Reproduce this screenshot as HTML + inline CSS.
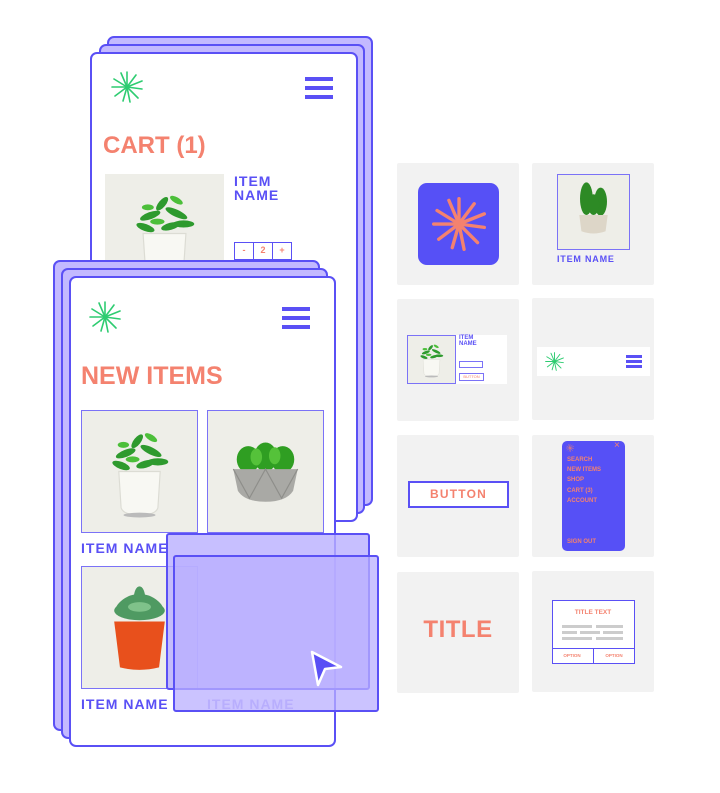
<!DOCTYPE html>
<html><head><meta charset="utf-8"><style>
*{margin:0;padding:0;box-sizing:border-box}
body{width:720px;height:793px;background:#fff;position:relative;overflow:hidden;font-family:"Liberation Sans",sans-serif}
.a{position:absolute}
.layer{position:absolute;background:#c3b9ff;border:2px solid #5a50f5;border-radius:7px}
.ph{position:absolute;background:#fff;border:2px solid #5a50f5;border-radius:7px;overflow:hidden}
.coral{color:#f4826f}
.blue{color:#5a50f5}
.tile{position:absolute;background:#f2f2f2;border-radius:2px}
.hb{position:absolute;width:28px;height:22px}
.hb i{display:block;height:4px;background:#5a50f5;margin-bottom:5px}
.b{font-weight:bold}
svg.st{stroke-width:1.6}
</style></head><body>
<svg width="0" height="0" style="position:absolute">
<defs>
<symbol id="ast" viewBox="-16 -16 32 32">
<g stroke="currentColor" stroke-linecap="round">
<line x1="0" y1="0" x2="0" y2="-15"/><line x1="0" y1="0" x2="9" y2="-12"/><line x1="0" y1="0" x2="15" y2="-6"/><line x1="0" y1="0" x2="15" y2="2"/><line x1="0" y1="0" x2="11" y2="11"/><line x1="0" y1="0" x2="3" y2="15"/><line x1="0" y1="0" x2="-4" y2="14"/><line x1="0" y1="0" x2="-12" y2="9"/><line x1="0" y1="0" x2="-15" y2="0"/><line x1="0" y1="0" x2="-13" y2="-8"/><line x1="0" y1="0" x2="-6" y2="-14"/>
</g></symbol>
<symbol id="jade" viewBox="0 0 100 100">
<rect width="100" height="100" fill="#eeeee8"/>
<path d="M32 50 h36 l-2 30 q-2 6 -16 6 q-14 0 -16 -6z" fill="#f8f8f3" stroke="#dcdcd4"/>
<ellipse cx="50" cy="86" rx="14" ry="2" fill="#bbb"/>
<g fill="#2e9a2e"><ellipse cx="38" cy="35" rx="9" ry="3" transform="rotate(-20 38 35)"/><ellipse cx="60" cy="33" rx="10" ry="3" transform="rotate(25 60 33)"/><ellipse cx="48" cy="25" rx="7" ry="3" transform="rotate(-50 48 25)"/><ellipse cx="66" cy="42" rx="9" ry="3"/><ellipse cx="34" cy="45" rx="8" ry="3" transform="rotate(20 34 45)"/><ellipse cx="55" cy="44" rx="8" ry="3" transform="rotate(-15 55 44)"/><ellipse cx="44" cy="40" rx="6" ry="2.5" fill="#4cbf3a"/><ellipse cx="60" cy="22" rx="6" ry="2.5" fill="#4cbf3a" transform="rotate(30 60 22)"/><ellipse cx="36" cy="28" rx="5" ry="2.5" fill="#4cbf3a"/></g>
</symbol>
<symbol id="cact" viewBox="0 0 100 100">
<rect width="100" height="100" fill="#eeeee8"/>
<g fill="#2f9e22"><ellipse cx="35" cy="40" rx="10" ry="11"/><ellipse cx="50" cy="38" rx="10" ry="12"/><ellipse cx="65" cy="40" rx="10" ry="11"/></g>
<g fill="#55c23a"><ellipse cx="42" cy="38" rx="5" ry="7"/><ellipse cx="58" cy="37" rx="5" ry="7"/></g>
<path d="M22 48 h56 l-4 18 q-6 9 -24 9 q-18 0 -24 -9z" fill="#a9a9a5"/>
<path d="M22 48 l14 24 l14 -24 l14 24 l14 -24" fill="none" stroke="#8e8e8a"/>
</symbol>
<symbol id="succ" viewBox="0 0 100 100">
<rect width="100" height="100" fill="#eeeee8"/>
<path d="M28 45 h44 l-5 38 q-17 4 -34 0z" fill="#e8501c"/>
<g fill="#4f9a62"><ellipse cx="50" cy="36" rx="22" ry="8"/><ellipse cx="40" cy="30" rx="12" ry="5" transform="rotate(-30 40 30)"/><ellipse cx="60" cy="30" rx="12" ry="5" transform="rotate(30 60 30)"/><ellipse cx="50" cy="26" rx="5" ry="10"/></g>
<g fill="#7fc28a"><ellipse cx="50" cy="33" rx="10" ry="4"/></g>
</symbol>
<symbol id="tall" viewBox="0 0 100 100">
<rect width="100" height="100" fill="#eeeee8"/>
<g fill="#2d8a25"><ellipse cx="40" cy="32" rx="9" ry="22"/><ellipse cx="60" cy="36" rx="9" ry="19"/><ellipse cx="50" cy="40" rx="8" ry="14"/></g>
<path d="M30 54 h40 l-3 22 q-17 6 -34 0z" fill="#ddd6c8"/>
</symbol>
</defs></svg>

<!-- back phone -->
<div class="layer" style="left:107px;top:36px;width:266px;height:470px"></div>
<div class="layer" style="left:99px;top:44px;width:266px;height:470px"></div>
<div class="ph" style="left:90px;top:52px;width:268px;height:470px">
<svg class="a st" style="left:19px;top:17px;color:#2ecc71" width="32" height="32"><use href="#ast"/></svg>
<div class="hb" style="left:213px;top:23px"><i></i><i></i><i></i></div>
<div class="a coral b" style="left:11px;top:78px;font-size:24px;white-space:nowrap">CART (1)</div>
<svg class="a" style="left:13px;top:120px" width="119" height="119" viewBox="0 0 100 100" preserveAspectRatio="none"><use href="#jade"/></svg>
<div class="a blue b" style="left:142px;top:120px;font-size:14px;line-height:14px;letter-spacing:1px">ITEM<br>NAME</div>
<div class="a" style="left:142px;top:188px;width:58px;height:18px;border:1.5px solid #5a50f5;display:flex;font-size:9px;color:#f4826f;font-weight:bold">
<span style="flex:1;text-align:center;line-height:15px">-</span><span style="flex:1;text-align:center;line-height:15px;border-left:1.5px solid #5a50f5;border-right:1.5px solid #5a50f5">2</span><span style="flex:1;text-align:center;line-height:15px">+</span></div>
</div>

<!-- front phone -->
<div class="layer" style="left:53px;top:260px;width:267px;height:471px"></div>
<div class="layer" style="left:61px;top:268px;width:267px;height:471px"></div>
<div class="ph" style="left:69px;top:276px;width:267px;height:471px">
<svg class="a st" style="left:18px;top:23px;color:#2ecc71" width="32" height="32"><use href="#ast"/></svg>
<div class="hb" style="left:211px;top:29px"><i></i><i></i><i></i></div>
<div class="a coral b" style="left:10px;top:84px;font-size:25px;white-space:nowrap">NEW ITEMS</div>
<svg class="a" style="left:10px;top:132px;border:1.5px solid #7b72f7" width="117" height="123" viewBox="0 0 100 100" preserveAspectRatio="none"><use href="#jade"/></svg>
<svg class="a" style="left:136px;top:132px;border:1.5px solid #7b72f7" width="117" height="123" viewBox="0 0 100 100" preserveAspectRatio="none"><use href="#cact"/></svg>
<div class="a blue b" style="left:10px;top:262px;font-size:14px;letter-spacing:1px;white-space:nowrap">ITEM NAME</div>
<svg class="a" style="left:10px;top:288px;border:1.5px solid #7b72f7" width="117" height="123" viewBox="0 0 100 100" preserveAspectRatio="none"><use href="#succ"/></svg>
<div class="a blue b" style="left:10px;top:418px;font-size:14px;letter-spacing:1px;white-space:nowrap">ITEM NAME</div>
<div class="a b" style="left:136px;top:418px;font-size:14px;letter-spacing:1px;white-space:nowrap;color:#b3aaf8">ITEM NAME</div>
</div>
<div class="a" style="left:166px;top:533px;width:204px;height:157px;background:rgba(185,175,255,0.8);border:2px solid #5a50f5;border-radius:3px"></div>
<div class="a" style="left:173px;top:555px;width:206px;height:157px;background:rgba(185,175,255,0.75);border:2px solid #5a50f5;border-radius:3px"></div>
<svg class="a" style="left:305px;top:645px" width="45" height="48"><path d="M7 7 L36 22 L20 24 L13 40 Z" fill="#5a50f5" stroke="#fff" stroke-width="2.5" stroke-linejoin="round"/></svg>

<!-- tiles -->
<div class="tile" style="left:397px;top:163px;width:122px;height:122px">
<div class="a" style="left:21px;top:20px;width:81px;height:82px;background:#5650f6;border-radius:9px">
<svg class="a" style="left:14px;top:14px;color:#f4826f;stroke-width:2" width="54" height="54"><use href="#ast"/></svg></div></div>
<div class="tile" style="left:532px;top:163px;width:122px;height:122px">
<svg class="a" style="left:25px;top:11px;border:1.5px solid #7b72f7" width="73" height="76" viewBox="0 0 100 100" preserveAspectRatio="none"><use href="#tall"/></svg>
<div class="a blue b" style="left:25px;top:91px;font-size:9px;letter-spacing:.8px;white-space:nowrap">ITEM NAME</div></div>
<div class="tile" style="left:397px;top:299px;width:122px;height:122px">
<div class="a" style="left:10px;top:36px;width:100px;height:49px;background:#fff"></div>
<svg class="a" style="left:10px;top:36px;border:1px solid #7b72f7" width="49" height="49" viewBox="0 0 100 100" preserveAspectRatio="none"><use href="#jade"/></svg>
<div class="a blue b" style="left:62px;top:36px;font-size:6px;line-height:6px">ITEM<br>NAME</div>
<div class="a" style="left:62px;top:62px;width:24px;height:7px;border:1px solid #7b72f7"></div>
<div class="a" style="left:62px;top:74px;width:25px;height:8px;border:1px solid #7b72f7;font-size:4px;color:#f4826f;text-align:center;line-height:6px">BUTTON</div></div>
<div class="tile" style="left:532px;top:298px;width:122px;height:122px">
<div class="a" style="left:5px;top:49px;width:113px;height:29px;background:#fff">
<svg class="a st" style="left:8px;top:5px;color:#2ecc71" width="19" height="19"><use href="#ast"/></svg>
<div class="a" style="left:89px;top:8px;width:16px"><div style="height:2.5px;background:#5a50f5;margin-bottom:2.5px"></div><div style="height:2.5px;background:#5a50f5;margin-bottom:2.5px"></div><div style="height:2.5px;background:#5a50f5"></div></div></div></div>
<div class="tile" style="left:397px;top:435px;width:122px;height:122px">
<div class="a coral b" style="left:11px;top:46px;width:101px;height:27px;border:2px solid #5a50f5;background:#fff;text-align:center;font-size:12px;line-height:23px;letter-spacing:1.2px">BUTTON</div></div>
<div class="tile" style="left:532px;top:435px;width:122px;height:122px">
<div class="a" style="left:30px;top:6px;width:63px;height:110px;background:#5650f6;border-radius:5px;font-size:6px;font-weight:bold;color:#f4826f;line-height:10.2px">
<svg class="a st" style="left:4px;top:3px;color:#f4826f" width="8" height="8"><use href="#ast"/></svg>
<div class="a" style="left:52px;top:0px;font-size:10px;font-weight:normal">×</div>
<div class="a" style="left:5px;top:14px;white-space:nowrap">SEARCH<br>NEW ITEMS<br>SHOP<br>CART (3)<br>ACCOUNT</div>
<div class="a" style="left:5px;top:96px">SIGN OUT</div></div></div>
<div class="tile" style="left:397px;top:572px;width:122px;height:121px">
<div class="a coral b" style="left:0;top:44px;width:122px;text-align:center;font-size:24px;letter-spacing:.5px">TITLE</div></div>
<div class="tile" style="left:532px;top:571px;width:122px;height:121px">
<div class="a" style="left:20px;top:29px;width:83px;height:64px;background:#fff;border:1.5px solid #5a50f5">
<div class="a coral b" style="left:0;top:8px;width:80px;text-align:center;font-size:6.5px">TITLE TEXT</div>
<div class="a" style="left:9px;top:24px;width:30px;height:3px;background:#ccc"></div><div class="a" style="left:43px;top:24px;width:27px;height:3px;background:#ccc"></div>
<div class="a" style="left:9px;top:30px;width:15px;height:3px;background:#ccc"></div><div class="a" style="left:27px;top:30px;width:20px;height:3px;background:#ccc"></div><div class="a" style="left:50px;top:30px;width:20px;height:3px;background:#ccc"></div>
<div class="a" style="left:9px;top:36px;width:30px;height:3px;background:#ccc"></div><div class="a" style="left:43px;top:36px;width:27px;height:3px;background:#ccc"></div>
<div class="a coral b" style="left:-1.5px;top:47px;width:83px;height:15px;border-top:1.5px solid #5a50f5;display:flex;font-size:4.5px;line-height:13px;text-align:center"><span style="flex:1;border-right:1.5px solid #5a50f5">OPTION</span><span style="flex:1">OPTION</span></div>
</div></div>
</body></html>
